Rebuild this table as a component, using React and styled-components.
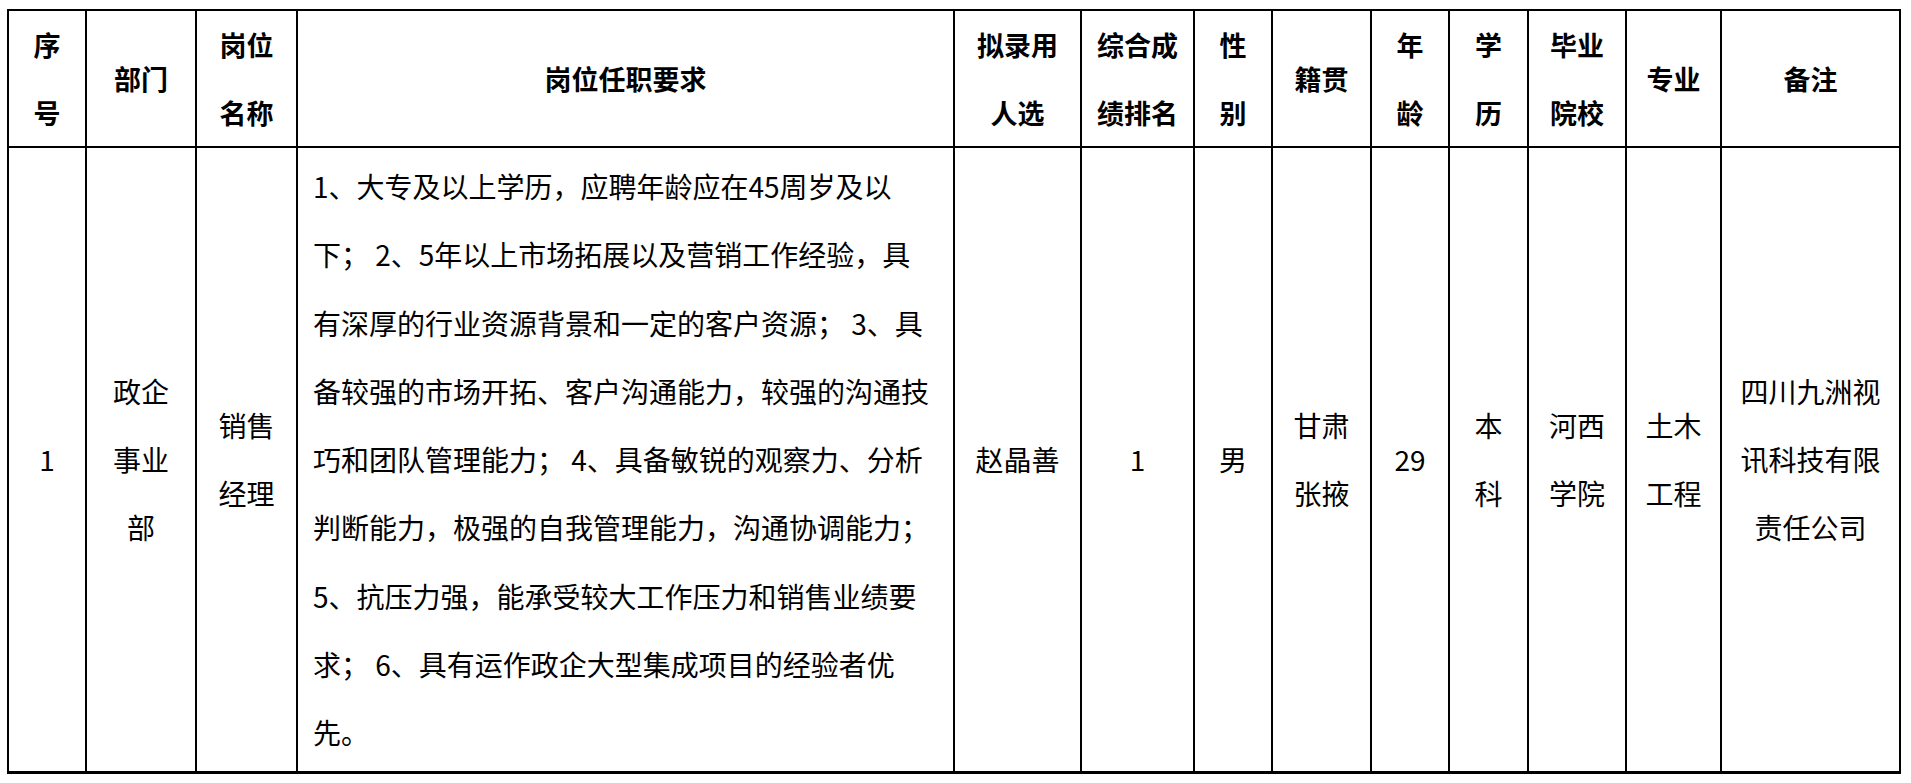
import React from "react";
import styled, { createGlobalStyle } from "styled-components";

const GlobalStyle = createGlobalStyle`
  html, body {
    margin: 0;
    padding: 0;
    background: #ffffff;
  }
  body {
    font-family: "Noto Sans CJK SC", "Microsoft YaHei", sans-serif;
    color: #000000;
  }
`;

const columns = [78, 110, 101, 657, 127, 113, 78, 99, 78, 79, 98, 95, 179];

const headers = [
  ["序", "号"],
  ["部门"],
  ["岗位", "名称"],
  ["岗位任职要求"],
  ["拟录用", "人选"],
  ["综合成", "绩排名"],
  ["性", "别"],
  ["籍贯"],
  ["年", "龄"],
  ["学", "历"],
  ["毕业", "院校"],
  ["专业"],
  ["备注"],
];

const requirement = [
  "1、大专及以上学历，应聘年龄应在45周岁及以",
  "下； 2、5年以上市场拓展以及营销工作经验，具",
  "有深厚的行业资源背景和一定的客户资源； 3、具",
  "备较强的市场开拓、客户沟通能力，较强的沟通技",
  "巧和团队管理能力； 4、具备敏锐的观察力、分析",
  "判断能力，极强的自我管理能力，沟通协调能力；",
  "5、抗压力强，能承受较大工作压力和销售业绩要",
  "求； 6、具有运作政企大型集成项目的经验者优",
  "先。",
];

const row = [
  ["1"],
  ["政企", "事业", "部"],
  ["销售", "经理"],
  requirement,
  ["赵晶善"],
  ["1"],
  ["男"],
  ["甘肃", "张掖"],
  ["29"],
  ["本", "科"],
  ["河西", "学院"],
  ["土木", "工程"],
  ["四川九洲视", "讯科技有限", "责任公司"],
];

const Page = styled.div`
  padding: 9px 0 0 7px;
`;

const Table = styled.table`
  border-collapse: collapse;
  table-layout: fixed;
  width: 1894px;
`;

const HeadRow = styled.tr`
  height: 137px;
`;

const BodyRow = styled.tr`
  height: 625px;
`;

const HeadCell = styled.th`
  border: 2px solid #000;
  padding: 0;
  font-size: 27px;
  font-weight: 700;
  line-height: 67.5px;
  text-align: center;
  vertical-align: middle;
  white-space: nowrap;
`;

const Cell = styled.td`
  border: 2px solid #000;
  border-bottom-width: 3px;
  padding: ${(p) => (p.$left ? "0 0 0 15px" : "0")};
  font-size: 28px;
  font-weight: 400;
  line-height: 68.3px;
  text-align: ${(p) => (p.$left ? "left" : "center")};
  vertical-align: middle;
  white-space: nowrap;
`;

const Line = styled.div``;

const Lines = ({ items }) => items.map((t, i) => <Line key={i}>{t}</Line>);

export default function App() {
  return (
    <Page>
      <GlobalStyle />
      <Table>
        <colgroup>
          {columns.map((w, i) => (
            <col key={i} style={{ width: w }} />
          ))}
        </colgroup>
        <thead>
          <HeadRow>
            {headers.map((h, i) => (
              <HeadCell key={i}>
                <Lines items={h} />
              </HeadCell>
            ))}
          </HeadRow>
        </thead>
        <tbody>
          <BodyRow>
            {row.map((c, i) => (
              <Cell key={i} $left={i === 3}>
                <Lines items={c} />
              </Cell>
            ))}
          </BodyRow>
        </tbody>
      </Table>
    </Page>
  );
}
